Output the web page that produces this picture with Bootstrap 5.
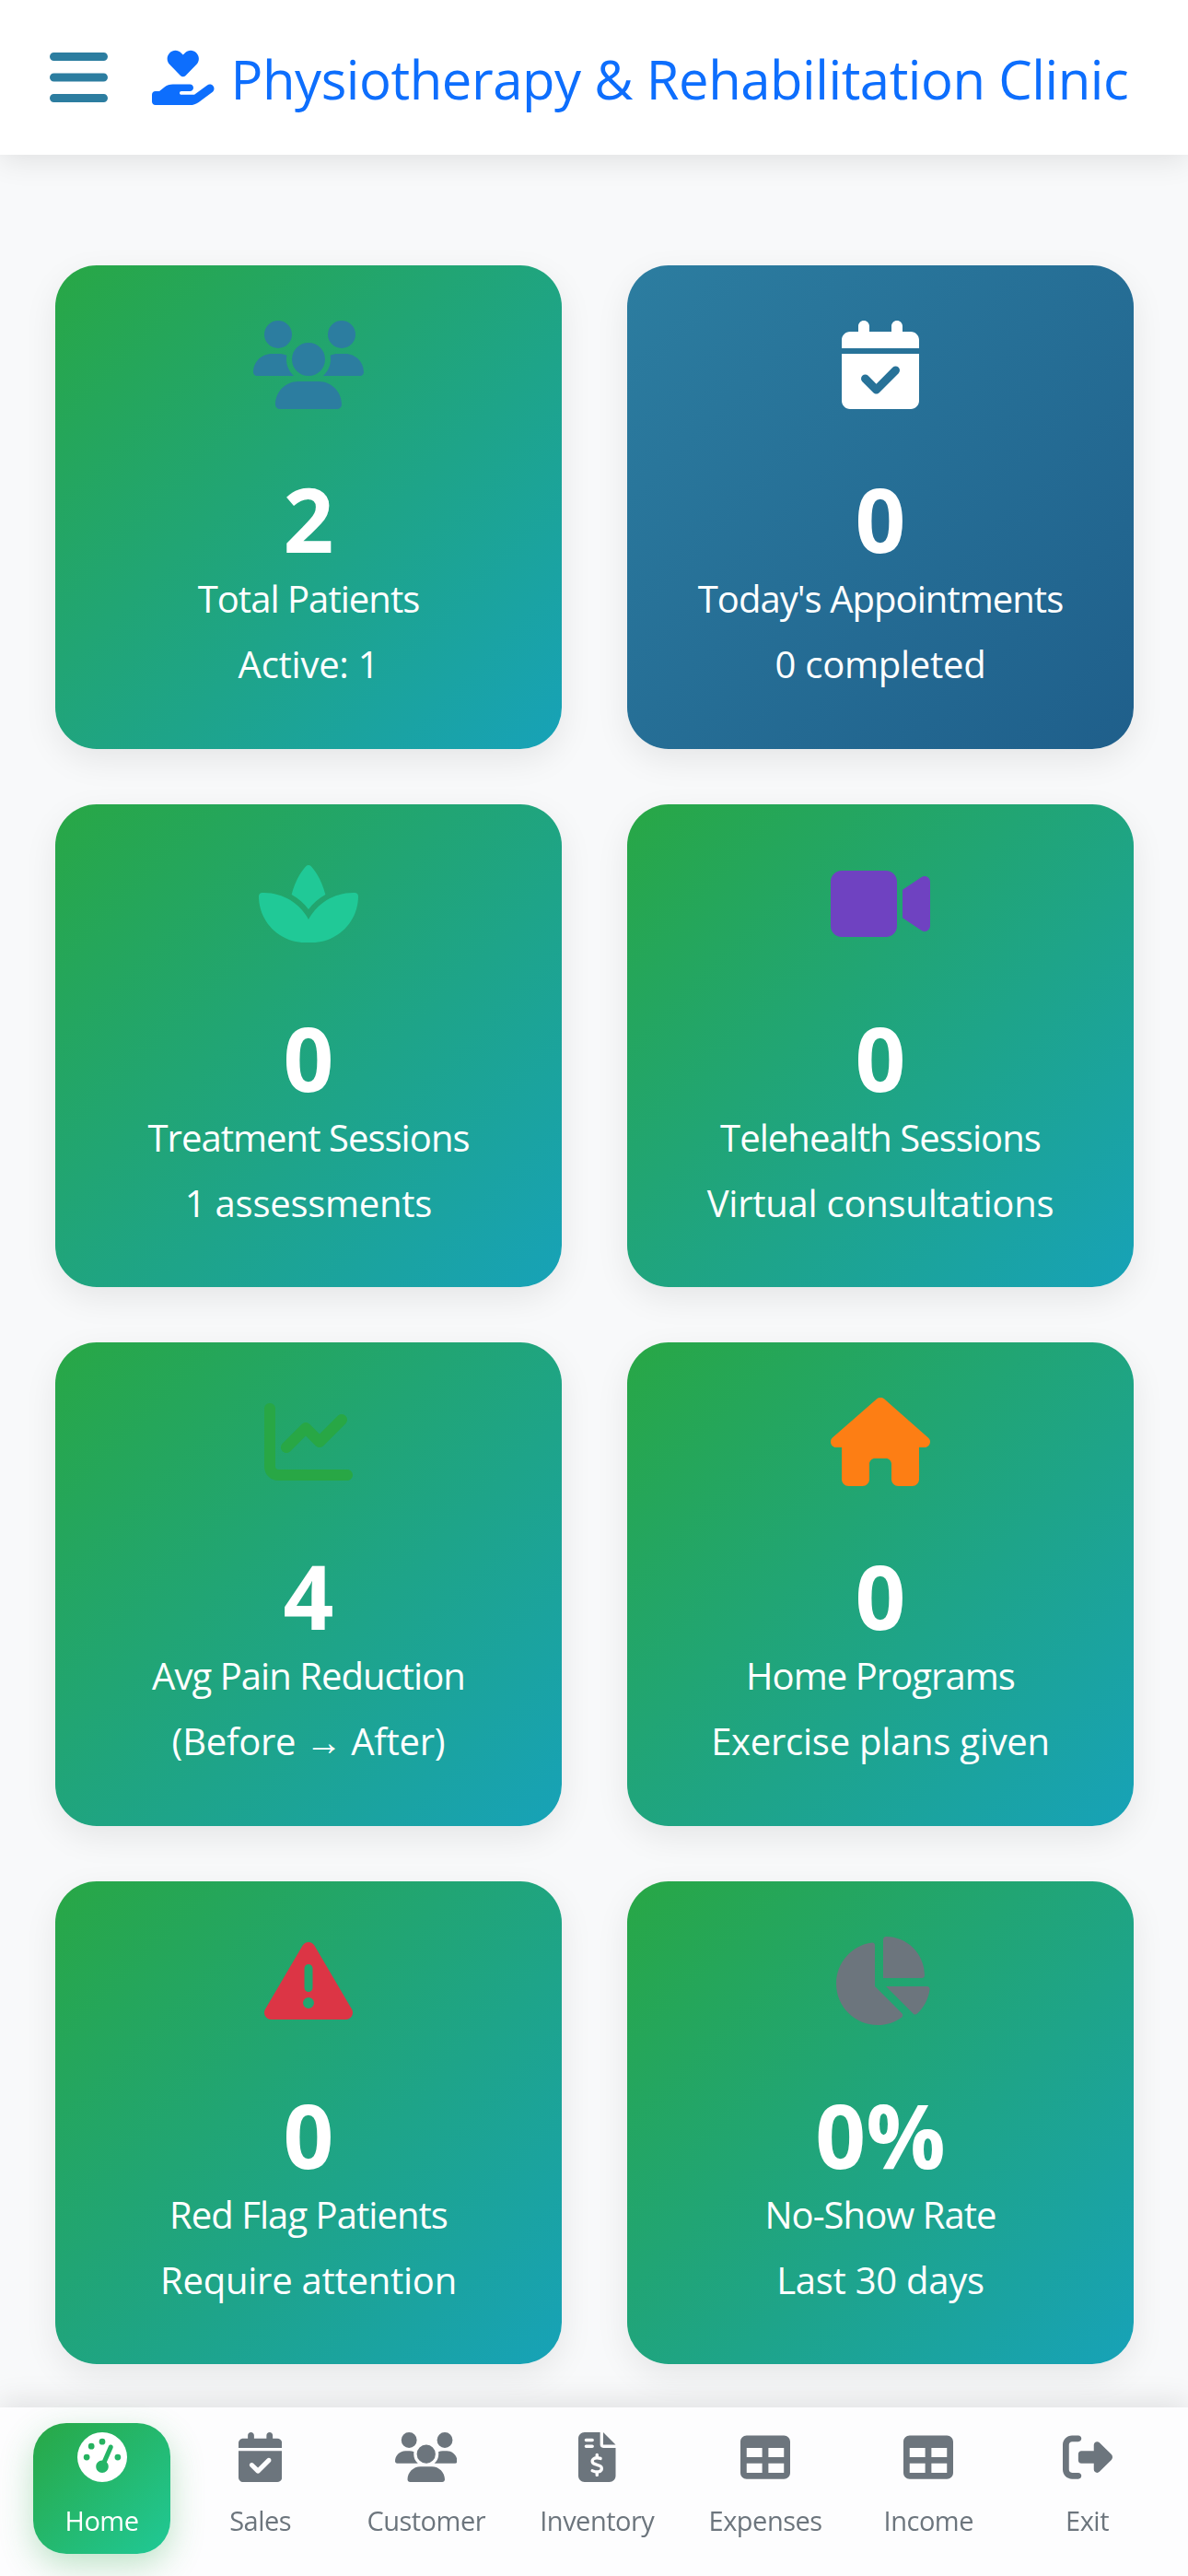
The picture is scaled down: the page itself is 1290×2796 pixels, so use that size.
<!DOCTYPE html>
<html lang="en">
<head>
    <meta charset="UTF-8">
    <meta name="viewport" content="width=device-width, initial-scale=1.0">
    <title>Physiotherapy &amp; Rehabilitation Clinic</title>
    <link href="https://cdn.jsdelivr.net/npm/bootstrap@5.3.0/dist/css/bootstrap.min.css" rel="stylesheet">
    <style>
        body {
            background-color: #f8f9fa;
            font-family: "Open Sans", "Noto Sans", sans-serif;
            height: 2796px;
            overflow: hidden;
        }
        svg { fill: currentColor; display: block; }
        .top-bar {
            height: 168px;
            padding-left: 54px;
            background: #fff;
            box-shadow: 0 6px 30px rgba(0, 0, 0, .1);
            position: relative;
        }
        .menu-icon { height: 72px; color: #2c7da0; margin-right: 48px; }
        .brand-icon { height: 60px; color: #0d6efd; margin-right: 18px; }
        .brand-name { font-size: 58px; line-height: 1; color: #0d6efd; letter-spacing: -.45px; white-space: nowrap; padding-top: 3px; }
        .stats-wrap { padding: 120px 59px 0 60px; }
        .stats-wrap .row { --bs-gutter-x: 71px; --bs-gutter-y: 60px; }
        .stat-card {
            height: 524.6px;
            padding-top: 60px;
            border: 0;
            border-radius: 45px;
            color: #fff;
            background: linear-gradient(135deg, #28a745, #17a2b8);
            box-shadow: 0 12px 36px rgba(0, 0, 0, .08);
        }
        .stat-card.blue { background: linear-gradient(135deg, #2c7da0, #1f5f8b); }
        .stat-icon { height: 96px; margin: 0 auto 63px; }
        .stat-num { font-size: 96px; font-weight: 700; line-height: 112px; }
        .stat-label, .stat-sub { font-size: 40px; line-height: 61px; }
        .stat-label { letter-spacing: -.95px; }
        .stat-sub { margin-top: 10px; letter-spacing: -.25px; }
        .arrow-glyph { font-family: "Liberation Sans", sans-serif; }
        .bottom-bar {
            position: fixed;
            left: 0; right: 0; bottom: 0;
            height: 183px;
            padding: 17px 35px 0 36px;
            background: #fdfdfe;
            box-shadow: 0 -6px 30px rgba(0, 0, 0, .1);
        }
        .tab-item {
            min-width: 149px;
            height: 142px;
            padding: 10px 18px 0;
            border-radius: 36px;
            color: #6c757d;
            text-decoration: none;
            font-size: 29px;
            line-height: 45px;
            letter-spacing: -.5px;
            white-space: nowrap;
        }
        .tab-item svg { height: 54px; margin-bottom: 19px; }
        .tab-item.on {
            color: #fff;
            background: linear-gradient(135deg, #28a745, #20c997);
            box-shadow: 0 12px 36px rgba(40, 167, 69, .3);
        }
    </style>
</head>
<body>
    <header class="top-bar d-flex align-items-center">
        <svg class="menu-icon" viewBox="0 0 448 512"><path d="M0 96C0 78.3 14.3 64 32 64H416c17.7 0 32 14.3 32 32s-14.3 32-32 32H32C14.3 128 0 113.7 0 96zM0 256c0-17.7 14.3-32 32-32H416c17.7 0 32 14.3 32 32s-14.3 32-32 32H32c-17.7 0-32-14.3-32-32zM448 416c0 17.7-14.3 32-32 32H32c-17.7 0-32-14.3-32-32s14.3-32 32-32H416c17.7 0 32 14.3 32 32z"/></svg>
        <svg class="brand-icon" viewBox="0 0 576 512"><path d="M163.9 136.9c-29.4-29.8-29.4-78.2 0-108s77-29.8 106.4 0l17.7 18 17.7-18c29.4-29.8 77-29.8 106.4 0s29.4 78.2 0 108L310.5 240.1c-6.2 6.3-14.3 9.4-22.5 9.4s-16.3-3.1-22.5-9.4L163.9 136.9zM568.2 336.3c13.1 17.8 9.3 42.8-8.5 55.9L433.1 485.5c-23.4 17.2-51.6 26.5-80.7 26.5H192 32c-17.7 0-32-14.3-32-32V416c0-17.7 14.3-32 32-32H68.8l44.9-36c22.7-18.2 50.9-28 80-28H272h16 64c17.7 0 32 14.3 32 32s-14.3 32-32 32H288 272c-8.8 0-16 7.2-16 16s7.2 16 16 16H392.6l119.7-88.2c17.8-13.1 42.8-9.3 55.9 8.5z"/></svg>
        <span class="brand-name">Physiotherapy &amp; Rehabilitation Clinic</span>
    </header>

    <main class="stats-wrap">
        <div class="row row-cols-2">
            <div class="col">
                <div class="card stat-card text-center">
                    <svg class="stat-icon" style="color:#2c7da0" viewBox="0 0 640 512"><path d="M144 0a80 80 0 1 1 0 160A80 80 0 1 1 144 0zM512 0a80 80 0 1 1 0 160A80 80 0 1 1 512 0zM0 298.7C0 239.8 47.8 192 106.7 192h42.7c15.9 0 31 3.5 44.6 9.7c-1.3 7.2-1.9 14.7-1.9 22.3c0 38.2 16.8 72.5 43.3 96c-.2 0-.4 0-.7 0H21.3C9.6 320 0 310.4 0 298.7zM405.3 320c-.2 0-.4 0-.7 0c26.6-23.5 43.3-57.8 43.3-96c0-7.6-.7-15-1.9-22.3c13.6-6.3 28.7-9.7 44.6-9.7h42.7C592.2 192 640 239.8 640 298.7c0 11.8-9.6 21.3-21.3 21.3H405.3zM224 224a96 96 0 1 1 192 0 96 96 0 1 1 -192 0zM128 485.3C128 411.7 187.7 352 261.3 352H378.7C452.3 352 512 411.7 512 485.3c0 14.7-11.9 26.7-26.7 26.7H154.7c-14.7 0-26.7-11.9-26.7-26.7z"/></svg>
                    <div class="stat-num">2</div>
                    <div class="stat-label">Total Patients</div>
                    <div class="stat-sub">Active: 1</div>
                </div>
            </div>
            <div class="col">
                <div class="card stat-card blue text-center">
                    <svg class="stat-icon" style="color:#fff" viewBox="0 0 448 512"><path d="M128 0c17.7 0 32 14.3 32 32V64H288V32c0-17.7 14.3-32 32-32s32 14.3 32 32V64h48c26.5 0 48 21.5 48 48v48H0V112C0 85.5 21.5 64 48 64H96V32c0-17.7 14.3-32 32-32zM0 192H448V464c0 26.5-21.5 48-48 48H48c-26.5 0-48-21.5-48-48V192zM329 305c9.4-9.4 9.4-24.6 0-33.9s-24.6-9.4-33.9 0l-95 95-47-47c-9.4-9.4-24.6-9.4-33.9 0s-9.4 24.6 0 33.9l64 64c9.4 9.4 24.6 9.4 33.9 0L329 305z"/></svg>
                    <div class="stat-num">0</div>
                    <div class="stat-label">Today's Appointments</div>
                    <div class="stat-sub">0 completed</div>
                </div>
            </div>
            <div class="col">
                <div class="card stat-card text-center">
                    <svg class="stat-icon" style="color:#20c997" viewBox="0 0 576 512"><path d="M183.1 235.3c33.7 20.7 62.9 48.1 85.8 80.5c7 9.9 13.4 20.3 19.1 31c5.7-10.8 12.1-21.1 19.1-31c22.9-32.4 52.1-59.8 85.8-80.5C437.6 207.8 490.1 192 546 192h9.9c11.1 0 20.1 9 20.1 20.1C576 360.1 456.1 480 308.1 480H288 267.9C119.9 480 0 360.1 0 212.1C0 201 9 192 20.1 192H30c55.9 0 108.4 15.8 153.1 43.3zM301.5 37.6c15.7 16.9 61.1 71.8 84.4 164.6c-38 21.6-71.4 50.8-97.9 85.6c-26.5-34.8-59.9-63.9-97.9-85.6c23.2-92.8 68.6-147.7 84.4-164.6C278 33.9 282.9 32 288 32s10 1.9 13.5 5.6z"/></svg>
                    <div class="stat-num">0</div>
                    <div class="stat-label">Treatment Sessions</div>
                    <div class="stat-sub">1 assessments</div>
                </div>
            </div>
            <div class="col">
                <div class="card stat-card text-center">
                    <svg class="stat-icon" style="color:#6f42c1" viewBox="0 0 576 512"><path d="M0 128C0 92.7 28.7 64 64 64H320c35.3 0 64 28.7 64 64V384c0 35.3-28.7 64-64 64H64c-35.3 0-64-28.7-64-64V128zM559.1 99.8c10.4 5.6 16.9 16.4 16.9 28.2V384c0 11.8-6.5 22.6-16.9 28.2s-23 5-32.9-1.6l-96-64L416 337.1V320 192 174.9l14.2-9.5 96-64c9.8-6.5 22.4-7.2 32.9-1.6z"/></svg>
                    <div class="stat-num">0</div>
                    <div class="stat-label">Telehealth Sessions</div>
                    <div class="stat-sub">Virtual consultations</div>
                </div>
            </div>
            <div class="col">
                <div class="card stat-card text-center">
                    <svg class="stat-icon" style="color:#28a745" viewBox="0 0 512 512"><path d="M64 64c0-17.7-14.3-32-32-32S0 46.3 0 64V400c0 44.2 35.8 80 80 80H480c17.7 0 32-14.3 32-32s-14.3-32-32-32H80c-8.8 0-16-7.2-16-16V64zm406.6 86.6c12.5-12.5 12.5-32.8 0-45.3s-32.8-12.5-45.3 0L320 210.7l-57.4-57.4c-12.5-12.5-32.8-12.5-45.3 0l-112 112c-12.5 12.5-12.5 32.8 0 45.3s32.8 12.5 45.3 0L240 221.3l57.4 57.4c12.5 12.5 32.8 12.5 45.3 0l128-128z"/></svg>
                    <div class="stat-num">4</div>
                    <div class="stat-label">Avg Pain Reduction</div>
                    <div class="stat-sub">(Before <span class="arrow-glyph">→</span> After)</div>
                </div>
            </div>
            <div class="col">
                <div class="card stat-card text-center">
                    <svg class="stat-icon" style="color:#fd7e14" viewBox="0 0 576 512"><path d="M575.8 255.5c0 18-15 32.1-32 32.1h-32l.7 160.2c0 2.7-.2 5.4-.5 8.1V472c0 22.1-17.9 40-40 40H456c-1.1 0-2.2 0-3.3-.1c-1.4 .1-2.8 .1-4.2 .1H416 392c-22.1 0-40-17.9-40-40V448 384c0-17.7-14.3-32-32-32H256c-17.7 0-32 14.3-32 32v64 24c0 22.1-17.9 40-40 40H160 128.1c-1.5 0-3-.1-4.5-.2c-1.2 .1-2.4 .2-3.6 .2H104c-22.1 0-40-17.9-40-40V360c0-.9 0-1.9 .1-2.8V287.6H32c-18 0-32-14-32-32.1c0-9 3-17 10-24L266.4 8c7-7 15-8 22-8s15 2 21 7L564.8 231.5c8 7 12 15 11 24z"/></svg>
                    <div class="stat-num">0</div>
                    <div class="stat-label">Home Programs</div>
                    <div class="stat-sub">Exercise plans given</div>
                </div>
            </div>
            <div class="col">
                <div class="card stat-card text-center">
                    <svg class="stat-icon" style="color:#dc3545" viewBox="0 0 512 512"><path d="M256 32c14.2 0 27.3 7.5 34.5 19.8l216 368c7.3 12.4 7.3 27.7 .2 40.1S486.3 480 472 480H40c-14.3 0-27.6-7.7-34.7-20.1s-7-27.8 .2-40.1l216-368C228.7 39.5 241.8 32 256 32zm0 128c-13.3 0-24 10.7-24 24V296c0 13.3 10.7 24 24 24s24-10.7 24-24V184c0-13.3-10.7-24-24-24zm32 224a32 32 0 1 0 -64 0 32 32 0 1 0 64 0z"/></svg>
                    <div class="stat-num">0</div>
                    <div class="stat-label">Red Flag Patients</div>
                    <div class="stat-sub">Require attention</div>
                </div>
            </div>
            <div class="col">
                <div class="card stat-card text-center">
                    <svg class="stat-icon" style="color:#6c757d" viewBox="0 0 576 512"><path d="M304 240V16.6c0-9 7-16.6 16-16.6C443.7 0 544 100.3 544 224c0 9-7.6 16-16.6 16H304zM32 272C32 150.7 122.1 50.3 239 34.3c9.2-1.3 17 6.1 17 15.4V288L412.5 444.5c6.7 6.7 6.2 17.7-1.5 23.1C371.8 495.6 323.8 512 272 512C139.5 512 32 404.6 32 272zm526.4 16c9.3 0 16.6 7.8 15.4 17c-7.7 55.9-34.6 105.6-73.9 142.3c-6 5.6-15.4 5.2-21.2-.7L320 288H558.4z"/></svg>
                    <div class="stat-num">0%</div>
                    <div class="stat-label">No-Show Rate</div>
                    <div class="stat-sub">Last 30 days</div>
                </div>
            </div>
        </div>
    </main>

    <nav class="bottom-bar d-flex justify-content-between align-items-start">
        <a href="#" class="tab-item on d-flex flex-column align-items-center">
            <svg viewBox="0 0 512 512"><path d="M0 256a256 256 0 1 1 512 0A256 256 0 1 1 0 256zM288 96a32 32 0 1 0 -64 0 32 32 0 1 0 64 0zM256 416c35.3 0 64-28.7 64-64c0-17.4-6.9-33.1-18.1-44.6L366 161.7c5.3-12.1-.2-26.3-12.3-31.6s-26.3 .2-31.6 12.3L257.9 288c-.6 0-1.3 0-1.9 0c-35.3 0-64 28.7-64 64s28.7 64 64 64zM176 144a32 32 0 1 0 -64 0 32 32 0 1 0 64 0zM96 288a32 32 0 1 0 0-64 32 32 0 1 0 0 64zm352-32a32 32 0 1 0 -64 0 32 32 0 1 0 64 0z"/></svg>
            <span>Home</span>
        </a>
        <a href="#" class="tab-item d-flex flex-column align-items-center">
            <svg viewBox="0 0 448 512"><path d="M128 0c17.7 0 32 14.3 32 32V64H288V32c0-17.7 14.3-32 32-32s32 14.3 32 32V64h48c26.5 0 48 21.5 48 48v48H0V112C0 85.5 21.5 64 48 64H96V32c0-17.7 14.3-32 32-32zM0 192H448V464c0 26.5-21.5 48-48 48H48c-26.5 0-48-21.5-48-48V192zM329 305c9.4-9.4 9.4-24.6 0-33.9s-24.6-9.4-33.9 0l-95 95-47-47c-9.4-9.4-24.6-9.4-33.9 0s-9.4 24.6 0 33.9l64 64c9.4 9.4 24.6 9.4 33.9 0L329 305z"/></svg>
            <span>Sales</span>
        </a>
        <a href="#" class="tab-item d-flex flex-column align-items-center">
            <svg viewBox="0 0 640 512"><path d="M144 0a80 80 0 1 1 0 160A80 80 0 1 1 144 0zM512 0a80 80 0 1 1 0 160A80 80 0 1 1 512 0zM0 298.7C0 239.8 47.8 192 106.7 192h42.7c15.9 0 31 3.5 44.6 9.7c-1.3 7.2-1.9 14.7-1.9 22.3c0 38.2 16.8 72.5 43.3 96c-.2 0-.4 0-.7 0H21.3C9.6 320 0 310.4 0 298.7zM405.3 320c-.2 0-.4 0-.7 0c26.6-23.5 43.3-57.8 43.3-96c0-7.6-.7-15-1.9-22.3c13.6-6.3 28.7-9.7 44.6-9.7h42.7C592.2 192 640 239.8 640 298.7c0 11.8-9.6 21.3-21.3 21.3H405.3zM224 224a96 96 0 1 1 192 0 96 96 0 1 1 -192 0zM128 485.3C128 411.7 187.7 352 261.3 352H378.7C452.3 352 512 411.7 512 485.3c0 14.7-11.9 26.7-26.7 26.7H154.7c-14.7 0-26.7-11.9-26.7-26.7z"/></svg>
            <span>Customer</span>
        </a>
        <a href="#" class="tab-item d-flex flex-column align-items-center">
            <svg viewBox="0 0 384 512"><path d="M64 0C28.7 0 0 28.7 0 64V448c0 35.3 28.7 64 64 64H320c35.3 0 64-28.7 64-64V160H256c-17.7 0-32-14.3-32-32V0H64zM256 0V128H384L256 0zM64 80c0-8.8 7.2-16 16-16h64c8.8 0 16 7.2 16 16s-7.2 16-16 16H80c-8.8 0-16-7.2-16-16zm0 64c0-8.8 7.2-16 16-16h64c8.8 0 16 7.2 16 16s-7.2 16-16 16H80c-8.8 0-16-7.2-16-16zm128 72c8.8 0 16 7.2 16 16v17.3c8.5 1.2 16.7 3.1 24.1 5.1c8.5 2.3 13.6 11 11.3 19.6s-11 13.6-19.6 11.3c-11.1-3-22-5.2-32.1-5.3c-8.4-.1-17.4 1.8-23.6 5.5c-5.7 3.4-8.1 7.3-8.1 12.8c0 3.7 1.3 6.5 7.3 10.1c6.9 4.1 16.6 7.1 29.2 10.9l.5 .1 0 0 0 0c11.3 3.4 25.3 7.6 36.3 14.6c12.1 7.6 22.4 19.7 22.7 38.2c.3 19.3-9.6 33.3-22.9 41.6c-7.7 4.8-16.4 7.6-25.1 9.1V440c0 8.8-7.2 16-16 16s-16-7.2-16-16V422.2c-11.2-2.1-21.7-5.7-30.9-8.9l0 0c-2.1-.7-4.2-1.4-6.2-2.1c-8.4-2.8-12.9-11.9-10.1-20.2s11.9-12.9 20.2-10.1c2.5 .8 4.8 1.6 7.1 2.4l0 0 0 0 0 0c13.6 4.6 24.6 8.4 36.3 8.7c9.1 .3 17.9-1.7 23.7-5.3c5.1-3.2 7.9-7.3 7.8-14c-.1-4.6-1.8-7.8-7.7-11.6c-6.8-4.3-16.5-7.4-29-11.2l-1.6-.5 0 0c-11-3.3-24.3-7.3-34.8-13.7c-12-7.2-22.6-18.9-22.7-37.3c-.1-19.4 10.8-32.8 23.8-40.5c7.5-4.4 15.8-7.2 24.1-8.7V232c0-8.8 7.2-16 16-16z"/></svg>
            <span>Inventory</span>
        </a>
        <a href="#" class="tab-item d-flex flex-column align-items-center">
            <svg viewBox="0 0 512 512"><path d="M64 256V160H224v96H64zm0 64H224v96H64V320zm224 96V320H448v96H288zM448 256H288V160H448v96zM64 32C28.7 32 0 60.7 0 96V416c0 35.3 28.7 64 64 64H448c35.3 0 64-28.7 64-64V96c0-35.3-28.7-64-64-64H64z"/></svg>
            <span>Expenses</span>
        </a>
        <a href="#" class="tab-item d-flex flex-column align-items-center">
            <svg viewBox="0 0 512 512"><path d="M64 256V160H224v96H64zm0 64H224v96H64V320zm224 96V320H448v96H288zM448 256H288V160H448v96zM64 32C28.7 32 0 60.7 0 96V416c0 35.3 28.7 64 64 64H448c35.3 0 64-28.7 64-64V96c0-35.3-28.7-64-64-64H64z"/></svg>
            <span>Income</span>
        </a>
        <a href="#" class="tab-item d-flex flex-column align-items-center">
            <svg viewBox="0 0 512 512"><path d="M377.9 105.9L500.7 228.7c7.2 7.2 11.3 17.1 11.3 27.3s-4.1 20.1-11.3 27.3L377.9 406.1c-6.4 6.4-15 9.9-24 9.9c-18.7 0-33.9-15.2-33.9-33.9l0-62.1-128 0c-17.7 0-32-14.3-32-32l0-64c0-17.7 14.3-32 32-32l128 0 0-62.1c0-18.7 15.2-33.9 33.9-33.9c9 0 17.6 3.6 24 9.9zM160 96L96 96c-17.7 0-32 14.3-32 32l0 256c0 17.7 14.3 32 32 32l64 0c17.7 0 32 14.3 32 32s-14.3 32-32 32l-64 0c-53 0-96-43-96-96L0 128C0 75 43 32 96 32l64 0c17.7 0 32 14.3 32 32s-14.3 32-32 32z"/></svg>
            <span>Exit</span>
        </a>
    </nav>

    <script src="https://cdn.jsdelivr.net/npm/bootstrap@5.3.0/dist/js/bootstrap.bundle.min.js"></script>
</body>
</html>
